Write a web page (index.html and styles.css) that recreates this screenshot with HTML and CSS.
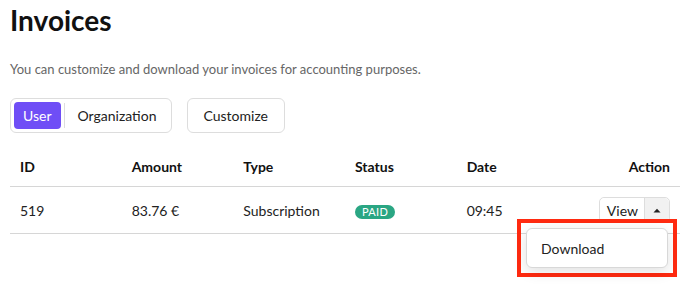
FILE: index.html
```html
<!DOCTYPE html>
<html lang="en">
<head>
    <meta charset="UTF-8">
    <title>Invoices</title>
    <link rel="stylesheet" href="styles.css">
</head>
<body>
    <div class="page">
        <h1>Invoices</h1>
        <p class="lead">You can customize and download your invoices for accounting purposes.</p>

        <div class="toolbar">
            <div class="segmented">
                <button class="seg active">User</button>
                <span class="seg-sep"></span>
                <button class="seg">Organization</button>
            </div>
            <button class="btn">Customize</button>
        </div>

        <table class="invoices">
            <thead>
                <tr>
                    <th>ID</th>
                    <th>Amount</th>
                    <th>Type</th>
                    <th>Status</th>
                    <th>Date</th>
                    <th class="right">Action</th>
                </tr>
            </thead>
            <tbody>
                <tr>
                    <td>519</td>
                    <td>83.76 €</td>
                    <td>Subscription</td>
                    <td><span class="badge">PAID</span></td>
                    <td>09:45</td>
                    <td class="right">
                        <div class="split">
                            <button class="split-main">View</button>
                            <button class="split-caret">
                                <svg width="8" height="5" viewBox="0 0 8 5"><path d="M0.5 4.5 L4 0.8 L7.5 4.5 Z" fill="#222"/></svg>
                            </button>
                            <div class="highlight">
                                <div class="menu">
                                    <div class="menu-item">Download</div>
                                </div>
                            </div>
                        </div>
                    </td>
                </tr>
            </tbody>
        </table>
    </div>
</body>
</html>
```

FILE: styles.css
```css
html, body {
    margin: 0;
    min-height: 301px;
}

body {
    font-family: Lato, "Open Sans", sans-serif;
    color: #1d1d1f;
    background: #fff;
}

.page {
    padding: 0 20px 0 10px;
}

h1 {
    margin: 0;
    padding-top: 3px;
    font-size: 28px;
    font-weight: 700;
    line-height: 34px;
    color: #111;
}

.lead {
    margin: 23px 0 0;
    font-size: 13px;
    line-height: 18px;
    color: #666;
}

.toolbar {
    display: flex;
    gap: 15px;
    margin-top: 20px;
}

.segmented {
    display: flex;
    align-items: center;
    height: 35px;
    box-sizing: border-box;
    padding: 3px;
    border: 1px solid #ddd;
    border-radius: 6px;
    background: #fff;
}

button {
    font-family: inherit;
    cursor: pointer;
}

.seg {
    height: 27px;
    padding: 0 9px;
    border: none;
    border-radius: 4px;
    background: none;
    font-size: 14px;
    color: #222;
}

.seg.active {
    background: #6f4ef6;
    color: #fff;
}

.seg + .seg-sep + .seg {
    padding: 0 11px 0 10px;
}

.seg-sep {
    width: 1px;
    height: 25px;
    margin: 0 3px;
    background: #ddd;
}

.btn {
    height: 35px;
    padding: 0 16px;
    border: 1px solid #ddd;
    border-radius: 6px;
    background: #fff;
    font-size: 14px;
    color: #222;
}

.invoices {
    width: 670px;
    margin-top: 20px;
    border-collapse: collapse;
    table-layout: fixed;
    font-size: 14px;
}

.invoices th {
    text-align: left;
    font-weight: 700;
    padding: 5px 10px 11px;
    border-bottom: 1px solid #d6d6d6;
    color: #111;
}

.invoices td {
    padding: 10px;
    height: 26px;
    border-bottom: 1px solid #d6d6d6;
    color: #222;
}

.invoices .right {
    text-align: right;
}

.badge {
    display: inline-block;
    padding: 0 7px;
    border-radius: 8px;
    background: #2aa683;
    color: #fff;
    font-size: 11px;
    line-height: 14px;
    letter-spacing: 0.3px;
    vertical-align: 0;
}

.split {
    position: relative;
    display: inline-flex;
    height: 26px;
    box-sizing: border-box;
    border: 1px solid #ddd;
    border-radius: 5px;
    vertical-align: middle;
}

.split-main {
    padding: 0 6px 0 7px;
    border: none;
    border-right: 1px solid #ddd;
    background: #fff;
    font-size: 14px;
    color: #222;
    border-radius: 5px 0 0 5px;
}

.split-caret {
    width: 24px;
    padding: 0;
    border: none;
    background: #f1f1f1;
    border-radius: 0 5px 5px 0;
    display: flex;
    align-items: center;
    justify-content: center;
}

.highlight {
    position: absolute;
    top: 21px;
    right: -8px;
    width: 142px;
    padding: 5px;
    border: 4px solid #ff2a10;
    text-align: left;
}

.menu {
    height: 40px;
    box-sizing: border-box;
    border: 1px solid #d8d8d8;
    border-radius: 6px;
    background: #fff;
    box-shadow: 0 4px 14px rgba(0, 0, 0, 0.12);
    display: flex;
    align-items: center;
}

.menu-item {
    padding-left: 14px;
    font-size: 14px;
    color: #222;
}
```
